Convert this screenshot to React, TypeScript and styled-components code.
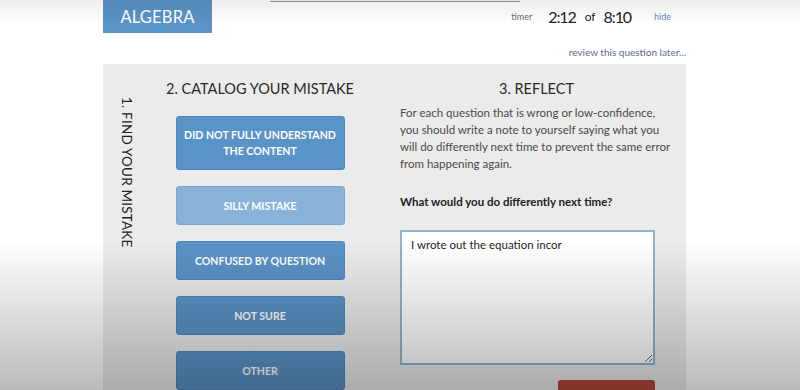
import React from 'react';
import styled, { createGlobalStyle } from 'styled-components';

const GlobalStyle = createGlobalStyle`
  html, body {
    margin: 0;
    padding: 0;
    background: #ffffff;
    font-family: Lato, "Open Sans", Arial, sans-serif;
  }
`;

const Page = styled.div`
  position: relative;
  height: 390px;
  overflow: hidden;
  background: #ffffff;
`;

// the screenshot is a video frame: darker at the top edge and toward the bottom
const Vignette = styled.div`
  position: absolute;
  inset: 0;
  pointer-events: none;
  background: linear-gradient(
    to bottom,
    rgba(0, 0, 0, 0.07) 0,
    rgba(0, 0, 0, 0) 24px,
    rgba(0, 0, 0, 0) 62%,
    rgba(0, 0, 0, 0.27) 100%
  );
`;

const Wrapper = styled.div`
  margin-left: 103px;
  width: 583px;
`;

const TopRow = styled.div`
  display: grid;
  grid-template-columns: 109px 1fr auto;
  height: 33px;
`;

const SubjectTab = styled.div`
  grid-column: 1;
  grid-row: 1;
  height: 33px;
  background: #5a93c7;
  color: #ffffff;
  font-size: 16.5px;
  letter-spacing: 0.2px;
  display: flex;
  align-items: center;
  justify-content: center;
`;

// bottom edge of the progress bar, scrolled almost out of view
const Track = styled.div`
  grid-column: 2 / 4;
  grid-row: 1;
  align-self: start;
  width: 250px;
  height: 1px;
  margin-left: 58px;
  background: #f2f2f2;
  border-bottom: 1px solid #9c9c9c;
`;

const Timer = styled.div`
  grid-column: 3;
  grid-row: 1;
  margin-right: 15px;
  height: 33px;
  display: flex;
  align-items: center;
  color: #222;
`;

const TimerLabel = styled.span`
  font-size: 9px;
  color: #666;
  margin-right: 16px;
`;

const TimerValue = styled.span`
  font-size: 16px;
  letter-spacing: -1.1px;
`;

const TimerOf = styled.span`
  font-size: 12px;
  margin: 0 8px 0 9px;
`;

const HideLink = styled.span`
  font-size: 9px;
  color: #5f86c4;
  margin-left: 23px;
`;

const ReviewRow = styled.div`
  height: 31px;
  display: flex;
  justify-content: flex-end;
  align-items: center;
  padding-top: 6px;
  box-sizing: border-box;
`;

const ReviewLink = styled.span`
  font-size: 10px;
  color: #5a6c92;
`;

const Panel = styled.div`
  background: #ebebeb;
  height: 330px;
  display: grid;
  grid-template-columns: 47px 220px 1fr;
`;

const SideLabel = styled.div`
  writing-mode: vertical-rl;
  font-size: 13.5px;
  color: #222;
  justify-self: center;
  padding-top: 33px;
  letter-spacing: 0.2px;
`;

const Column = styled.div<{ $inset?: boolean }>`
  display: flex;
  flex-direction: column;
  padding: 15px ${(p) => (p.$inset ? '13px 0 30px' : '0 0 0')};
`;

const Heading = styled.div`
  font-size: 14.5px;
  line-height: 20px;
  color: #2a2a2a;
  text-align: center;
`;

const ButtonList = styled.div`
  display: flex;
  flex-direction: column;
  align-items: center;
  gap: 16px;
  margin-top: 17px;
`;

const MistakeButton = styled.div<{ $light?: boolean; $tall?: boolean }>`
  width: 169px;
  height: ${(p) => (p.$tall ? 54 : 39)}px;
  box-sizing: border-box;
  border-radius: 3px;
  background: ${(p) => (p.$light ? '#8ab2d9' : '#5a93c7')};
  border: 1px solid ${(p) => (p.$light ? '#7fa8d0' : '#4f87bc')};
  color: #ffffff;
  font-size: 10.6px;
  font-weight: 700;
  line-height: 16px;
  text-align: center;
  display: flex;
  align-items: center;
  justify-content: center;
  padding: 0 4px;
`;

const Paragraph = styled.p`
  margin: 5px 0 0;
  font-size: 11.5px;
  line-height: 17px;
  color: #4a4a4a;
`;

const Prompt = styled.div`
  margin-top: 21px;
  font-size: 11.5px;
  line-height: 17px;
  font-weight: 700;
  color: #222;
`;

const Answer = styled.textarea`
  margin-top: 20px;
  width: 255px;
  height: 135px;
  box-sizing: border-box;
  border: 2px solid #8fb1d3;
  border-radius: 1px;
  background: #ffffff;
  padding: 6px 9px;
  font-family: Lato, "Open Sans", Arial, sans-serif;
  font-size: 11.5px;
  color: #222;
  outline: none;
  resize: vertical;
`;

const NextButton = styled.div`
  margin-top: 15px;
  margin-left: 158px;
  width: 97px;
  height: 30px;
  border-radius: 3px;
  background: #b3473b;
  color: #ffffff;
  font-size: 11px;
  font-weight: 700;
  display: flex;
  align-items: center;
  justify-content: center;
`;

const mistakes = [
  { label: 'Did not fully understand the content', tall: true },
  { label: 'Silly mistake', light: true },
  { label: 'Confused by question' },
  { label: 'Not sure' },
  { label: 'Other' },
];

export default function App() {
  return (
    <Page>
      <GlobalStyle />
      <Wrapper>
        <TopRow>
          <SubjectTab>ALGEBRA</SubjectTab>
          <Track />
          <Timer>
            <TimerLabel>timer</TimerLabel>
            <TimerValue>2:12</TimerValue>
            <TimerOf>of</TimerOf>
            <TimerValue>8:10</TimerValue>
            <HideLink>hide</HideLink>
          </Timer>
        </TopRow>
        <ReviewRow>
          <ReviewLink>review this question later...</ReviewLink>
        </ReviewRow>
        <Panel>
          <SideLabel>1. FIND YOUR MISTAKE</SideLabel>
          <Column>
            <Heading>2. CATALOG YOUR MISTAKE</Heading>
            <ButtonList>
              {mistakes.map((m) => (
                <MistakeButton key={m.label} $light={m.light} $tall={m.tall}>
                  {m.label.toUpperCase()}
                </MistakeButton>
              ))}
            </ButtonList>
          </Column>
          <Column $inset>
            <Heading>3. REFLECT</Heading>
            <Paragraph>
              For each question that is wrong or low-confidence, you should write a note to yourself
              saying what you will do differently next time to prevent the same error from happening
              again.
            </Paragraph>
            <Prompt>What would you do differently next time?</Prompt>
            <Answer readOnly defaultValue="I wrote out the equation incor" />
            <NextButton>NEXT QUESTION</NextButton>
          </Column>
        </Panel>
      </Wrapper>
      <Vignette />
    </Page>
  );
}
